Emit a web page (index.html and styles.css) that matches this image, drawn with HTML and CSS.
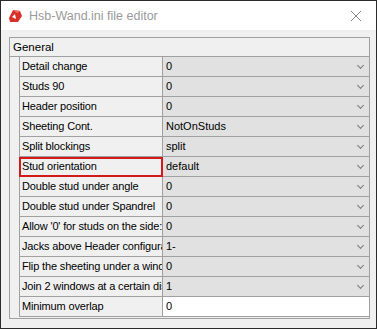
FILE: index.html
```html
<!DOCTYPE html>
<html lang="en">
<head>
  <meta charset="UTF-8" />
  <title>Hsb-Wand.ini file editor</title>
  <link rel="stylesheet" href="styles.css">
</head>
<body>

<div class="window">
  <div class="titlebar">
    <svg class="app-icon" width="16" height="16" viewBox="0 0 16 16">
      <polygon points="2,10 6,2 13,3 15,8 11,14 3,14" fill="#d9302a"/>
      <polygon points="6,2 13,3 10,5" fill="#f07060"/>
      <polygon points="5,9 8,6 9,11" fill="#fff"/>
    </svg>
    <span class="title">Hsb-Wand.ini file editor</span>
    <svg class="close" width="12" height="12" viewBox="0 0 12 12">
      <path d="M1 1 L11 11 M11 1 L1 11" stroke="#8a8a8a" stroke-width="1" fill="none"/>
    </svg>
  </div>

  <div class="content">
    <div class="grid">
      <div class="category">General</div>
      <div class="rows">
        <div class="row"><div class="label">Detail change</div><div class="value combo">0</div></div>
        <div class="row"><div class="label">Studs 90</div><div class="value combo">0</div></div>
        <div class="row"><div class="label">Header position</div><div class="value combo">0</div></div>
        <div class="row"><div class="label">Sheeting Cont.</div><div class="value combo">NotOnStuds</div></div>
        <div class="row"><div class="label">Split blockings</div><div class="value combo">split</div></div>
        <div class="row"><div class="label selected">Stud orientation</div><div class="value combo">default</div></div>
        <div class="row"><div class="label">Double stud under angle</div><div class="value combo">0</div></div>
        <div class="row"><div class="label">Double stud under Spandrel</div><div class="value combo">0</div></div>
        <div class="row"><div class="label">Allow '0' for studs on the side:</div><div class="value combo">0</div></div>
        <div class="row"><div class="label">Jacks above Header configuration</div><div class="value combo">1-</div></div>
        <div class="row"><div class="label">Flip the sheeting under a window</div><div class="value combo">0</div></div>
        <div class="row"><div class="label">Join 2 windows at a certain distance</div><div class="value combo">1</div></div>
        <div class="row"><div class="label">Minimum overlap</div><div class="value text">0</div></div>
      </div>
    </div>
  </div>
</div>

</body>
</html>
```

FILE: styles.css
```css
body {
  margin: 0;
  padding: 0;
  background-color: #f0f0f0;
  font-family: "Liberation Sans", Arial, sans-serif;
}
.window {
  box-sizing: border-box;
  width: 377px;
  height: 329px;
  border: 1px solid #2b2b2b;
  background-color: #f0f0f0;
}
.titlebar {
  height: 29px;
  background-color: #fff;
  display: flex;
  align-items: center;
  padding: 0 14px 0 6px;
}
.app-icon {
  margin-right: 6px;
}
.title {
  flex: 1;
  font-family: "Liberation Sans", Arial, sans-serif;
  font-size: 12.5px;
  color: #9a9a9a;
}
.content {
  padding: 7px 6px 0 8px;
}
.grid {
  border: 1px solid #a0a0a0;
  background-color: #f0f0f0;
}
.category {
  height: 18px;
  line-height: 18px;
  font-size: 11.5px;
  color: #000;
  padding-left: 3px;
  border-bottom: 1px solid #a0a0a0;
}
.rows {
  padding-left: 9px;
  padding-bottom: 1px;
}
.row {
  display: flex;
  height: 20px;
}
.label {
  box-sizing: border-box;
  width: 144px;
  border-left: 1px solid #a0a0a0;
  border-right: 1px solid #a0a0a0;
  border-bottom: 1px solid #a0a0a0;
  padding-left: 2px;
  font-size: 11px;
  letter-spacing: -0.15px;
  line-height: 19px;
  white-space: nowrap;
  overflow: hidden;
}
.label.selected {
  outline: 2px solid #d21a1a;
  outline-offset: -2px;
}
.value {
  box-sizing: border-box;
  flex: 1;
  border-bottom: 1px solid #a0a0a0;
  padding-left: 3px;
  font-size: 11px;
  line-height: 19px;
  position: relative;
}
.value.combo {
  background-color: #e1e1e1;
}
.value.combo::after {
  content: "";
  position: absolute;
  right: 6px;
  top: 6px;
  width: 4px;
  height: 4px;
  border-right: 1px solid #7a7a7a;
  border-bottom: 1px solid #7a7a7a;
  transform: rotate(45deg);
}
.value.text {
  background-color: #fff;
}
```
